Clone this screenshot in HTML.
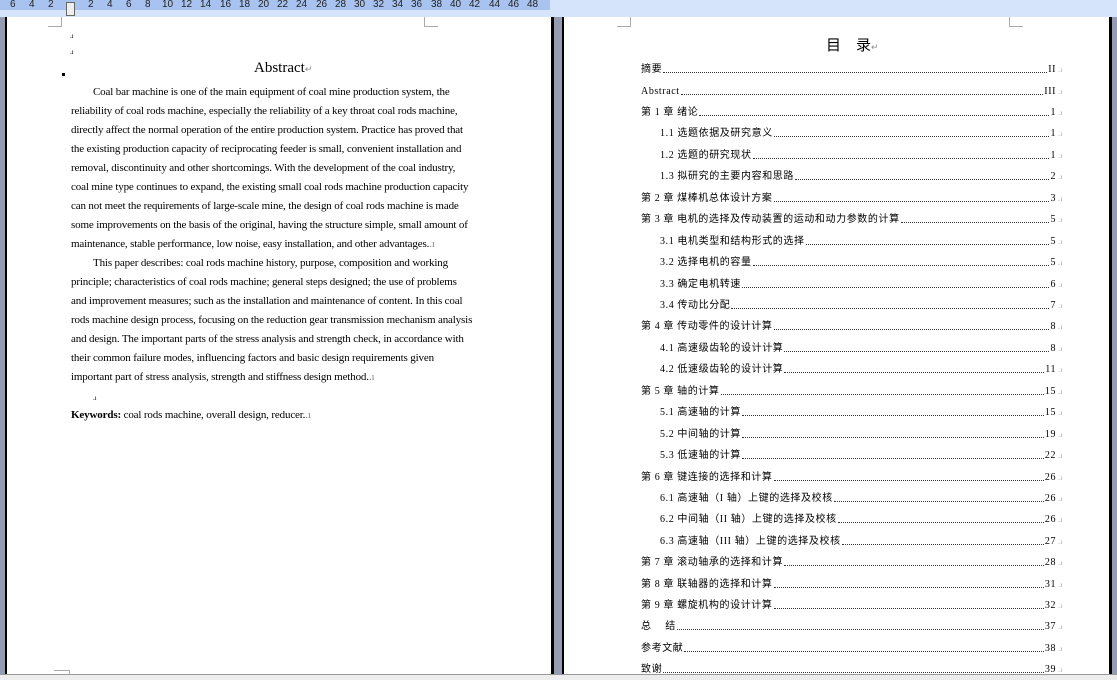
<!DOCTYPE html>
<html><head><meta charset="utf-8"><style>
*{margin:0;padding:0;box-sizing:border-box}
body{width:1117px;height:680px;overflow:hidden;background:#939cb0;position:relative;font-family:"Liberation Serif","Noto Serif CJK SC",serif;color:#000}
.a{position:absolute}
#ruler{left:0;top:0;width:1117px;height:17px;background:#d6e4fb}
#rd{left:0;top:0;width:550px;height:10px;background:#a8c3f0}
.rn{position:absolute;top:-1px;font:10px "Liberation Sans",sans-serif;color:#222}
.page{background:#fff;top:17px;height:657px}
.bl{background:#000}
.ln{position:absolute;left:71px;font-size:11px;white-space:nowrap;line-height:12px;letter-spacing:-0.15px}
.toc{position:absolute;left:641px;width:422px;height:14px;display:flex;align-items:flex-end;font-family:"Liberation Serif","Noto Sans CJK SC",sans-serif;font-size:10px;line-height:12px;white-space:nowrap;letter-spacing:0.6px}
.toc .d{flex:1;border-bottom:1px dotted #333;margin:0 1px 3px}
.toc .m{color:#999;font-size:7px;margin-left:2px}
.toc.s{left:660px;width:403px}
.mk{position:absolute;border-color:#aaa;border-style:solid;border-width:0}
</style></head><body>
<div id="ruler" class="a"></div><div id="rd" class="a"></div>
<div class="a" style="left:0;top:10px;width:1117px;height:7px;background:#d6e4fb"></div>
<div class="rn" style="left:10px">6</div><div class="rn" style="left:29px">4</div><div class="rn" style="left:48px">2</div>
<div class="a" style="left:66px;top:2px;width:9px;height:14px;border:1px solid #666;background:#eee"></div>
<div class="rn" style="left:88px">2</div><div class="rn" style="left:107px">4</div><div class="rn" style="left:126px">6</div><div class="rn" style="left:145px">8</div><div class="rn" style="left:162px">10</div><div class="rn" style="left:181px">12</div><div class="rn" style="left:200px">14</div><div class="rn" style="left:220px">16</div><div class="rn" style="left:239px">18</div><div class="rn" style="left:258px">20</div><div class="rn" style="left:277px">22</div><div class="rn" style="left:296px">24</div><div class="rn" style="left:316px">26</div><div class="rn" style="left:335px">28</div><div class="rn" style="left:354px">30</div><div class="rn" style="left:373px">32</div><div class="rn" style="left:392px">34</div><div class="rn" style="left:411px">36</div><div class="rn" style="left:431px">38</div><div class="rn" style="left:450px">40</div><div class="rn" style="left:469px">42</div><div class="rn" style="left:489px">44</div><div class="rn" style="left:508px">46</div><div class="rn" style="left:527px">48</div>

<div class="a bl" style="left:5px;top:17px;width:2px;height:657px"></div>
<div class="a page" style="left:7px;width:544px"></div>
<div class="a bl" style="left:551px;top:17px;width:3px;height:657px"></div>
<div class="a bl" style="left:562px;top:17px;width:2px;height:657px"></div>
<div class="a page" style="left:564px;width:545px"></div>
<div class="a bl" style="left:1109px;top:17px;width:3px;height:657px"></div>
<div class="a" style="left:0;top:674px;width:1117px;height:6px;background:#ededed;border-top:1px solid #999"></div>

<div class="mk" style="left:48px;top:17px;width:14px;height:10px;border-right-width:1px;border-bottom-width:1px"></div>
<div class="mk" style="left:424px;top:17px;width:14px;height:10px;border-left-width:1px;border-bottom-width:1px"></div>
<div class="mk" style="left:54px;top:670px;width:16px;height:4px;border-top-width:1px;border-right-width:1px"></div>
<div class="mk" style="left:617px;top:17px;width:14px;height:10px;border-right-width:1px;border-bottom-width:1px"></div>
<div class="mk" style="left:1009px;top:17px;width:14px;height:10px;border-left-width:1px;border-bottom-width:1px"></div>

<div class="a" style="left:62px;top:73px;width:3px;height:3px;background:#000"></div>
<div class="ln" style="left:70px;top:30px;font-size:7px">.ı</div>
<div class="ln" style="left:70px;top:46px;font-size:7px">.ı</div>
<div class="a" style="left:254px;top:60px;font-size:15px">Abstract<span style="font-size:9px;color:#888">↵</span></div>
<div class="ln" style="left:93px;top:86px">Coal bar machine is one of the main equipment of coal mine production system, the</div>
<div class="ln" style="top:105px">reliability of coal rods machine, especially the reliability of a key throat coal rods machine,</div>
<div class="ln" style="top:124px">directly affect the normal operation of the entire production system. Practice has proved that</div>
<div class="ln" style="top:143px">the existing production capacity of reciprocating feeder is small, convenient installation and</div>
<div class="ln" style="top:162px">removal, discontinuity and other shortcomings. With the development of the coal industry,</div>
<div class="ln" style="top:181px">coal mine type continues to expand, the existing small coal rods machine production capacity</div>
<div class="ln" style="top:200px">can not meet the requirements of large-scale mine, the design of coal rods machine is made</div>
<div class="ln" style="top:219px">some improvements on the basis of the original, having the structure simple, small amount of</div>
<div class="ln" style="top:238px">maintenance, stable performance, low noise, easy installation, and other advantages.<span style="color:#888">.ı</span></div>
<div class="ln" style="left:93px;top:257px">This paper describes: coal rods machine history, purpose, composition and working</div>
<div class="ln" style="top:276px">principle; characteristics of coal rods machine; general steps designed; the use of problems</div>
<div class="ln" style="top:295px">and improvement measures; such as the installation and maintenance of content. In this coal</div>
<div class="ln" style="top:314px">rods machine design process, focusing on the reduction gear transmission mechanism analysis</div>
<div class="ln" style="top:333px">and design. The important parts of the stress analysis and strength check, in accordance with</div>
<div class="ln" style="top:352px">their common failure modes, influencing factors and basic design requirements given</div>
<div class="ln" style="top:371px">important part of stress analysis, strength and stiffness design method.<span style="color:#888">.ı</span></div>
<div class="ln" style="left:93px;top:392px;font-size:7px">.ı</div>
<div class="ln" style="top:409px"><b>Keywords:</b> coal rods machine, overall design, reducer.<span style="color:#888">.ı</span></div>

<div class="a" style="left:826px;top:34px;font:15px 'Noto Sans CJK SC',sans-serif">目　录<span style="font-size:9px;color:#888">↵</span></div>

<div class="toc" style="top:62px">摘要<span class="d"></span>II<span class="m">.ı</span></div>
<div class="toc" style="top:84px">Abstract<span class="d"></span>III<span class="m">.ı</span></div>
<div class="toc" style="top:105px">第 1 章  绪论<span class="d"></span>1<span class="m">.ı</span></div>
<div class="toc s" style="top:126px">1.1  选题依据及研究意义<span class="d"></span>1<span class="m">.ı</span></div>
<div class="toc s" style="top:148px">1.2  选题的研究现状<span class="d"></span>1<span class="m">.ı</span></div>
<div class="toc s" style="top:169px">1.3  拟研究的主要内容和思路<span class="d"></span>2<span class="m">.ı</span></div>
<div class="toc" style="top:191px">第 2 章  煤棒机总体设计方案<span class="d"></span>3<span class="m">.ı</span></div>
<div class="toc" style="top:212px">第 3 章 电机的选择及传动装置的运动和动力参数的计算<span class="d"></span>5<span class="m">.ı</span></div>
<div class="toc s" style="top:234px">3.1  电机类型和结构形式的选择<span class="d"></span>5<span class="m">.ı</span></div>
<div class="toc s" style="top:255px">3.2  选择电机的容量<span class="d"></span>5<span class="m">.ı</span></div>
<div class="toc s" style="top:277px">3.3  确定电机转速<span class="d"></span>6<span class="m">.ı</span></div>
<div class="toc s" style="top:298px">3.4  传动比分配<span class="d"></span>7<span class="m">.ı</span></div>
<div class="toc" style="top:319px">第 4 章  传动零件的设计计算<span class="d"></span>8<span class="m">.ı</span></div>
<div class="toc s" style="top:341px">4.1  高速级齿轮的设计计算<span class="d"></span>8<span class="m">.ı</span></div>
<div class="toc s" style="top:362px">4.2  低速级齿轮的设计计算<span class="d"></span>11<span class="m">.ı</span></div>
<div class="toc" style="top:384px">第 5 章  轴的计算<span class="d"></span>15<span class="m">.ı</span></div>
<div class="toc s" style="top:405px">5.1  高速轴的计算<span class="d"></span>15<span class="m">.ı</span></div>
<div class="toc s" style="top:427px">5.2  中间轴的计算<span class="d"></span>19<span class="m">.ı</span></div>
<div class="toc s" style="top:448px">5.3  低速轴的计算<span class="d"></span>22<span class="m">.ı</span></div>
<div class="toc" style="top:470px">第 6 章  键连接的选择和计算<span class="d"></span>26<span class="m">.ı</span></div>
<div class="toc s" style="top:491px">6.1  高速轴（I 轴）上键的选择及校核<span class="d"></span>26<span class="m">.ı</span></div>
<div class="toc s" style="top:512px">6.2  中间轴（II 轴）上键的选择及校核<span class="d"></span>26<span class="m">.ı</span></div>
<div class="toc s" style="top:534px">6.3  高速轴（III 轴）上键的选择及校核<span class="d"></span>27<span class="m">.ı</span></div>
<div class="toc" style="top:555px">第 7 章  滚动轴承的选择和计算<span class="d"></span>28<span class="m">.ı</span></div>
<div class="toc" style="top:577px">第 8 章  联轴器的选择和计算<span class="d"></span>31<span class="m">.ı</span></div>
<div class="toc" style="top:598px">第 9 章  螺旋机构的设计计算<span class="d"></span>32<span class="m">.ı</span></div>
<div class="toc" style="top:619px">总　 结<span class="d"></span>37<span class="m">.ı</span></div>
<div class="toc" style="top:641px">参考文献<span class="d"></span>38<span class="m">.ı</span></div>
<div class="toc" style="top:662px">致谢<span class="d"></span>39<span class="m">.ı</span></div>
</body></html>
